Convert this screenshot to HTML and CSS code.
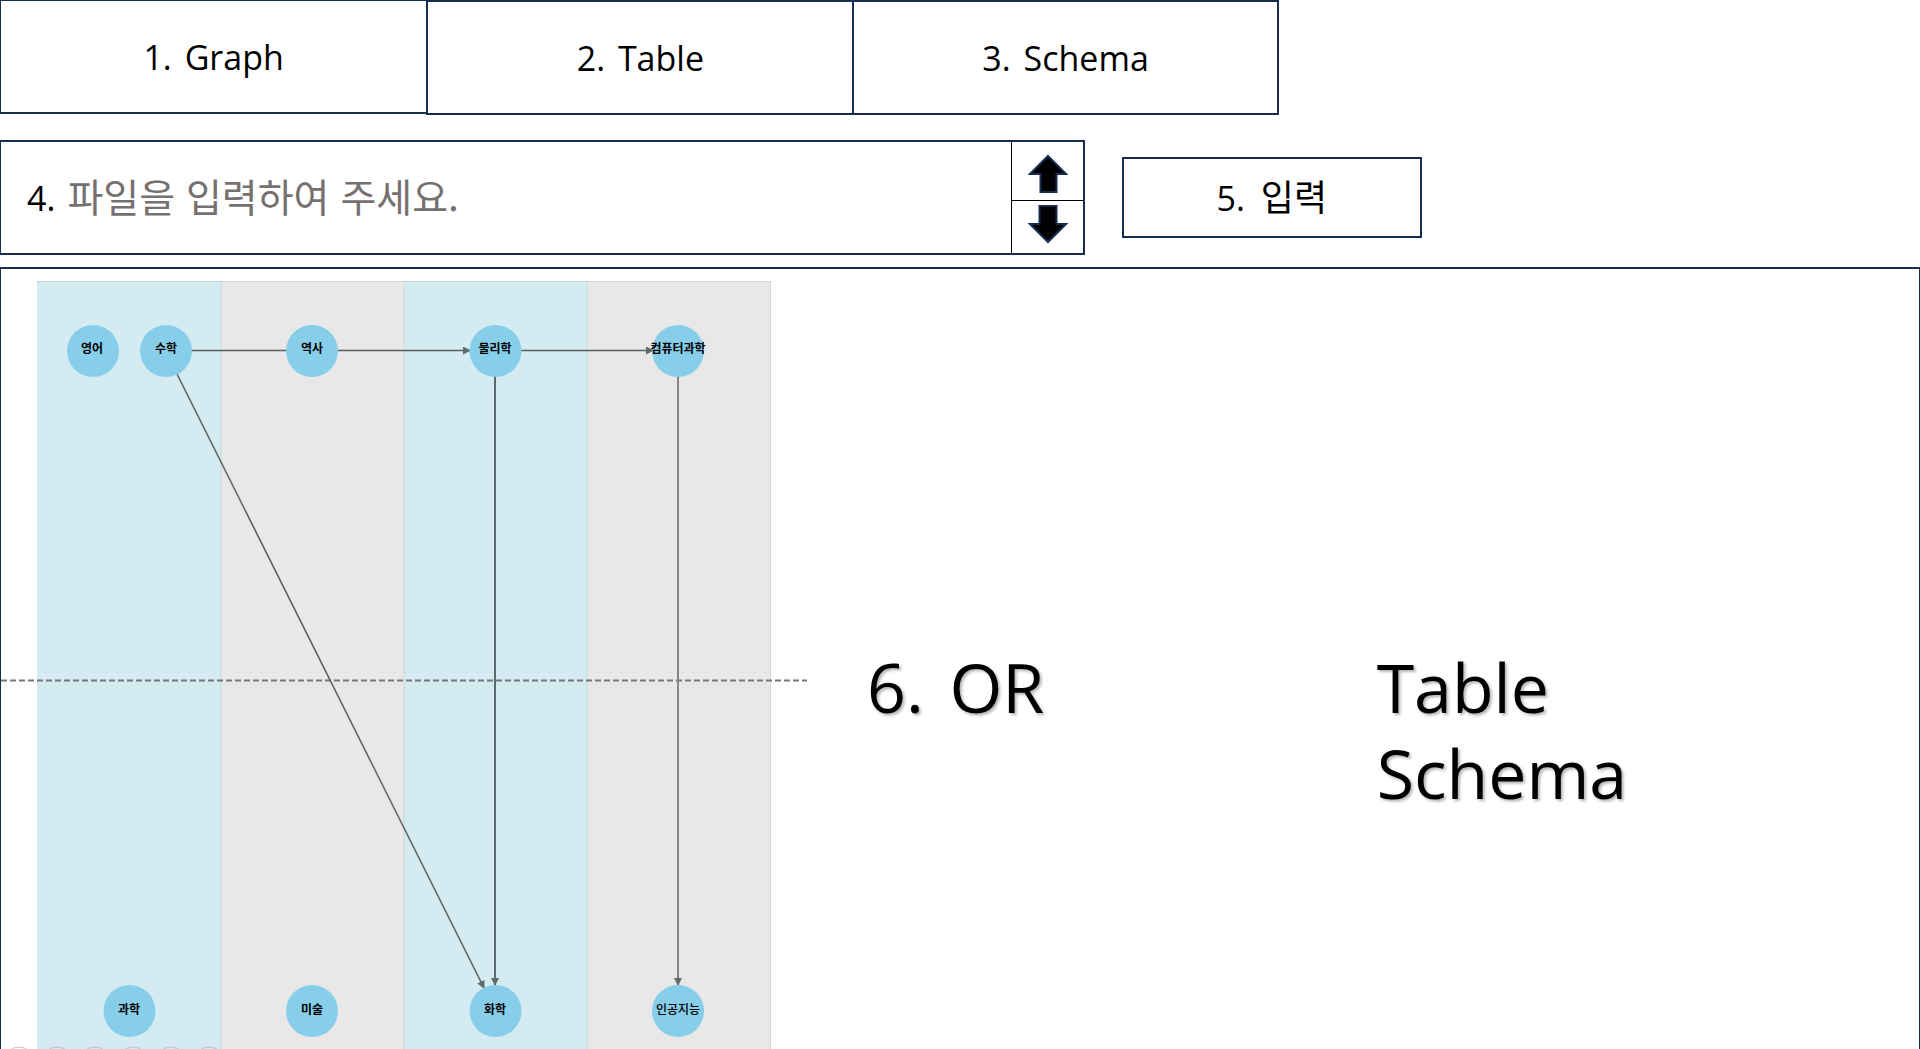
FILE: index.html
```html
<!DOCTYPE html>
<html lang="ko">
<head>
<meta charset="utf-8">
<title>Graph</title>
<link rel="stylesheet" href="styles.css">
</head>
<body>
<nav class="tabs">
  <button class="tab tab-active" type="button"><span class="num">1.</span> Graph</button>
  <button class="tab" type="button"><span class="num">2.</span> Table</button>
  <button class="tab" type="button"><span class="num">3.</span> Schema</button>
</nav>
<form class="entry">
  <div class="field">
    <label class="field-label" for="file">4.</label>
    <input class="field-input" id="file" type="text" placeholder="파일을 입력하여 주세요.">
    <div class="stepper">
      <button class="step step-up" type="button" aria-label="위로">
        <svg width="40" height="40" viewBox="0 0 40 40"><path d="M20 2 38 20H28.500V38H12.500V20H2Z"/></svg>
      </button>
      <button class="step step-down" type="button" aria-label="아래로">
        <svg width="40" height="40" viewBox="0 0 40 40"><path d="M20 38 38 20H28.500V2H11.500V20H2Z"/></svg>
      </button>
    </div>
  </div>
  <button class="submit" type="button"><span>5.</span><span class="ko">입력</span></button>
</form>
<main class="panel">
  <svg class="graph" width="806" height="780" viewBox="0 269 806 780" role="img" aria-label="과목 그래프">
    <defs>
      <marker id="arrow" viewBox="0 0 8 8" refX="7" refY="4" markerWidth="8" markerHeight="8" markerUnits="userSpaceOnUse" orient="auto"><path class="head" d="M0 0 8 4 0 8Z"/></marker>
    </defs>
    <g class="band-blue"><path d="M36 281H220V1049H36Z"/><path d="M403 281H586V1049H403Z"/></g>
    <g class="band-gray"><path d="M220 281H403V1049H220Z"/><path d="M586 281H770V1049H586Z"/></g>
    <path class="band-edge" d="M220 281V1049M403 281V1049M586 281V1049M769.500 281V1049M36 281.500H770"/>
    <path class="divider" d="M0 680.500H806"/>
    <g class="edges">
      <path d="M191 350.500H286"/>
      <path d="M337 350.500H469" marker-end="url(#arrow)"/>
      <path d="M520 350.500H652" marker-end="url(#arrow)"/>
      <path d="M176 374 483 988" marker-end="url(#arrow)"/>
      <path class="edge-heavy" d="M494 376V985" marker-end="url(#arrow)"/>
      <path class="edge-light" d="M677 376V985" marker-end="url(#arrow)"/>
    </g>
    <g class="nodes">
      <circle cx="92" cy="351" r="26"/><circle cx="165" cy="351" r="26"/><circle cx="311" cy="351" r="26"/><circle cx="494.500" cy="351" r="26"/><circle cx="677" cy="351" r="26"/>
      <circle cx="128.500" cy="1011" r="26"/><circle cx="311" cy="1011" r="26"/><circle cx="494.500" cy="1011" r="26"/><circle cx="677" cy="1011" r="26"/>
    </g>
    <g class="names">
      <text x="91" y="353">영어</text><text x="165" y="353">수학</text><text x="311" y="353">역사</text><text x="494" y="353">물리학</text><text x="677" y="353">컴퓨터과학</text>
      <text x="128" y="1014">과학</text><text x="311" y="1014">미술</text><text x="494" y="1014">화학</text><text class="name-light" x="677" y="1014">인공지능</text>
    </g>
    <g class="rings">
      <circle class="ring-green" cx="18" cy="1063" r="16"/><circle cx="56" cy="1063" r="16"/><circle cx="94" cy="1063" r="16"/><circle cx="132" cy="1063" r="16"/><circle cx="170" cy="1063" r="16"/><circle cx="208" cy="1063" r="16"/>
    </g>
  </svg>
  <p class="choice"><span class="num">6.</span> OR</p>
  <p class="choice">Table<br>Schema</p>
</main>
</body>
</html>
```
FILE: styles.css
```css
:root {
  --line: #172c51;
  --latin: "Open Sans", "Noto Sans CJK KR", sans-serif;
  --korean: "Noto Sans CJK KR", sans-serif;
}
* { box-sizing: border-box; }
body {
  margin: 0;
  min-height: 100vh;
  display: flex;
  flex-direction: column;
  background: #fff;
  color: #000;
  font-family: var(--latin);
  font-size: 34px;
}
button {
  margin: 0;
  padding: 0;
  border: 0;
  background: #fff;
  color: #000;
  font: inherit;
}
.num { margin-right: 4px; }
.tabs {
  display: grid;
  grid-template-columns: repeat(3, 1fr);
  width: 66.6%;
  height: 115px;
}
.tab {
  border: 2px solid var(--line);
  border-right-width: 0;
}
.tab:last-child { border-right-width: 2px; }
.tab-active {
  height: 114px;
  border-top-width: 1px;
  border-left-width: 1px;
}
.entry {
  display: flex;
  align-items: center;
  gap: 37px;
  margin: 25px 0 12px;
}
.field {
  display: flex;
  align-items: center;
  width: 56.5%;
  height: 115px;
  border: 2px solid var(--line);
  border-left-width: 1px;
  padding-left: 26px;
}
.field-input {
  flex: 1;
  min-width: 0;
  margin-left: 12px;
  padding: 0 0 6px;
  border: 0;
  outline: 0;
  background: none;
  font-family: var(--korean);
  font-size: 39px;
}
.field-input::placeholder { color: #767171; opacity: 1; }
.stepper {
  display: grid;
  grid-template-rows: 58px 1fr;
  align-self: stretch;
  width: 72px;
  border-left: 1px solid #000;
}
.step {
  display: grid;
  justify-items: center;
  padding-left: 2px;
}
.step-up { align-items: end; padding-bottom: 6px; }
.step-down { align-items: start; border-top: 1px solid #000; padding-top: 3px; }
.step svg { display: block; }
.step path { fill: #000; stroke: var(--line); stroke-width: 2; }
.submit {
  display: flex;
  align-items: center;
  justify-content: center;
  gap: 16px;
  width: 300px;
  height: 81px;
  border: 2px solid var(--line);
}
.ko {
  padding-bottom: 6px;
  font-family: var(--korean);
  font-size: 36px;
  line-height: 40px;
}
.panel {
  flex: 1 0 0;
  display: grid;
  grid-template-columns: 806px 11fr 13fr;
  align-items: start;
  border: 1px solid var(--line);
  border-top-width: 2px;
  border-bottom: 0;
  overflow: hidden;
}
.graph { display: block; }
.choice {
  margin: 0;
  padding: 375px 0 0 60px;
  font-size: 68px;
  line-height: 86px;
  text-shadow: 2px 2px 3px rgba(0, 0, 0, .3);
}
.choice .num { margin-right: 8px; }
.band-blue { fill: #d4ebf1; }
.band-gray { fill: #e8e8e8; }
.band-edge { fill: none; stroke: #b4c8cd; stroke-opacity: .5; }
.divider { stroke: #777; stroke-width: 2; stroke-dasharray: 6 3; }
.edges { fill: none; stroke: #566060; stroke-width: 1.5; }
.edges .edge-heavy { stroke: #566b70; stroke-width: 2; }
.edges .edge-light { stroke: #858585; stroke-width: 2; }
.head { fill: #5f6b6d; stroke: none; }
.nodes { fill: #87ceeb; }
.names {
  font-family: var(--korean);
  font-size: 12px;
  font-weight: 700;
  text-anchor: middle;
}
.name-light { font-weight: 500; }
.rings { fill: none; stroke: #b5c3c6; }
.ring-green { stroke: #bccdb8; }
```
